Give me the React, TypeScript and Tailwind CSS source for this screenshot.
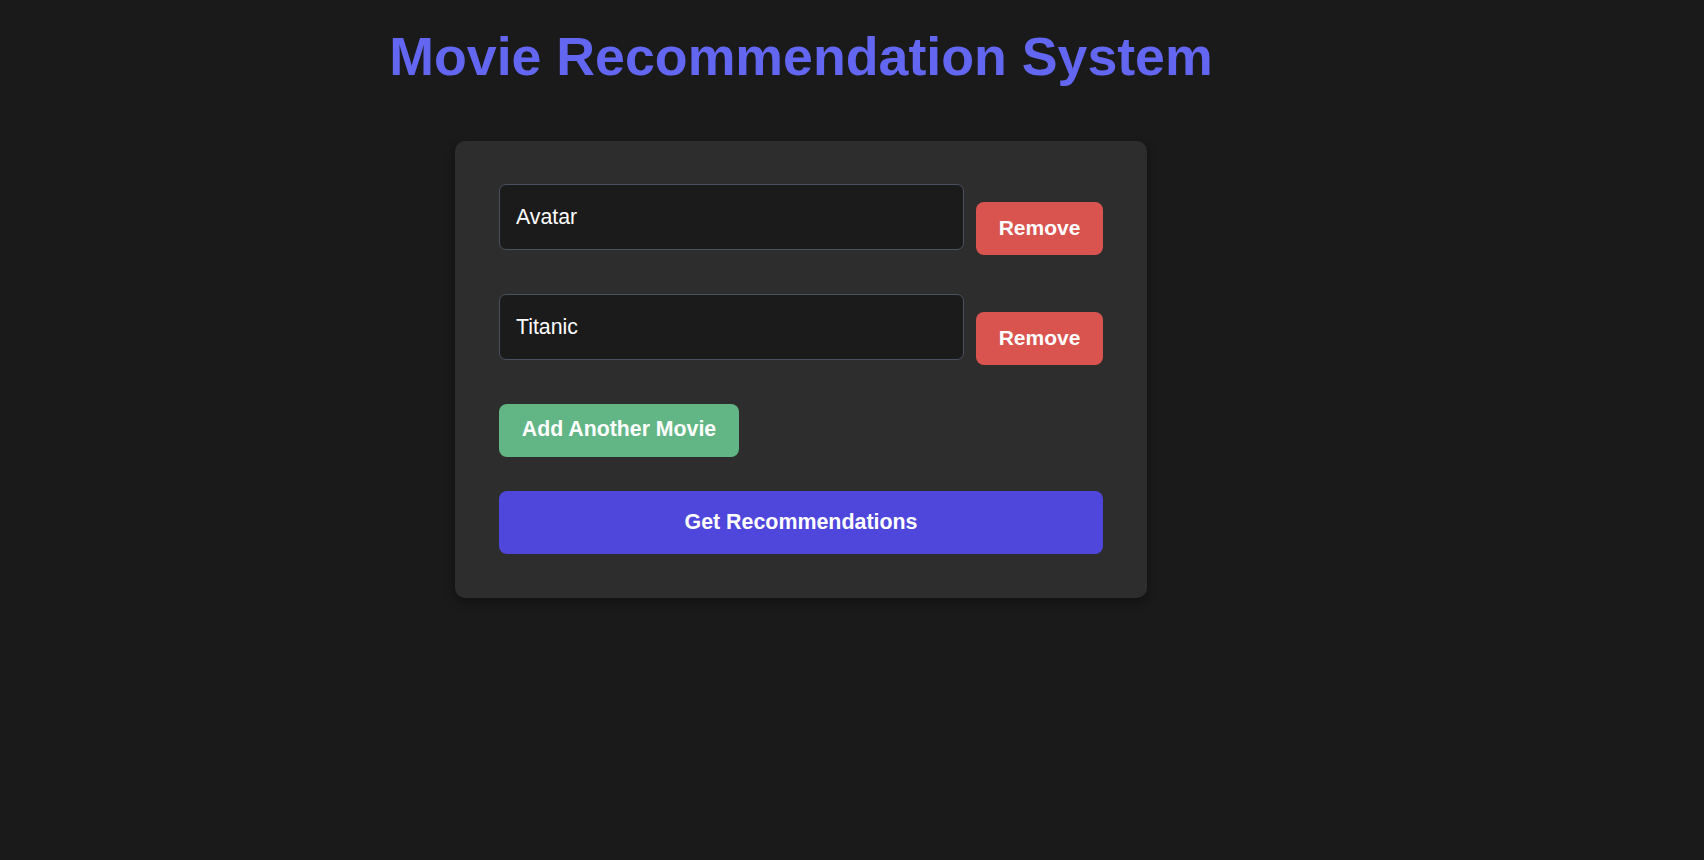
import { useState } from 'react';

/** Movie recommendation form: list of movie inputs plus actions. */
export default function App() {
  const [movies, setMovies] = useState<string[]>(['Avatar', 'Titanic']);

  const updateMovie = (index: number, value: string) => {
    setMovies(movies.map((m, i) => (i === index ? value : m)));
  };

  const removeMovie = (index: number) => {
    setMovies(movies.filter((_, i) => i !== index));
  };

  return (
    <div
      className="min-h-[860px] w-full bg-[#1a1a1a] pr-[102px] pt-[29px]"
      style={{ fontFamily: '"Liberation Sans", Arial, sans-serif' }}
    >
      <div className="flex flex-col items-center">
        <h1 className="m-0 text-[53.7px] font-bold leading-[54px] text-[#6366f1]">
          Movie Recommendation System
        </h1>

        <div className="mt-[58px] flex w-[692px] flex-col rounded-[10px] bg-[#2d2d2d] px-[44px] pb-[44px] pt-[43px] shadow-[0_4px_10px_rgba(0,0,0,0.35)]">
          <div className="flex flex-col gap-[39px]">
            {movies.map((movie, index) => (
              <div key={index} className="flex items-start gap-[12px]">
                <input
                  type="text"
                  value={movie}
                  onChange={(e) => updateMovie(index, e.target.value)}
                  className="h-[66px] w-[465px] rounded-[7px] border border-[#4b5060] bg-[#1b1b1b] px-[16px] text-[21.3px] text-white outline-none"
                />
                <button
                  onClick={() => removeMovie(index)}
                  className="mt-[18px] h-[53px] w-[127px] rounded-lg bg-[#d9534f] pb-[2px] text-[21px] font-bold text-white"
                >
                  Remove
                </button>
              </div>
            ))}
          </div>

          <button
            onClick={() => setMovies([...movies, ''])}
            className="mt-[39px] h-[53px] w-[240px] rounded-lg bg-[#62b686] pb-[2px] text-[21.3px] font-bold text-white"
          >
            Add Another Movie
          </button>

          <button className="mt-[34px] h-[63px] w-full rounded-lg bg-[#4f46dc] text-[21.4px] font-bold text-white">
            Get Recommendations
          </button>
        </div>
      </div>
    </div>
  );
}
